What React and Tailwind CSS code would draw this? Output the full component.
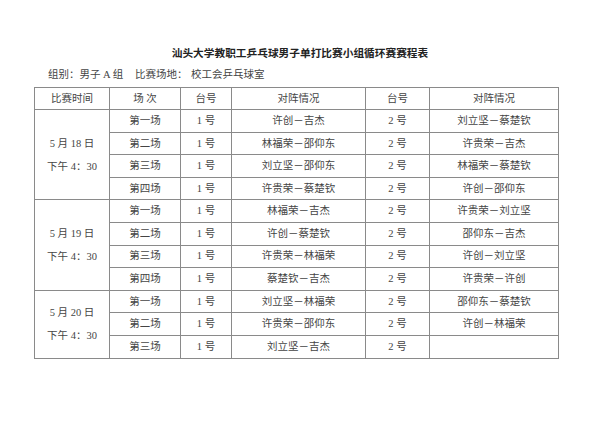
const groups = [
  {
    date: '5 月 18 日',
    time: '下午 4：30',
    rows: [
      ['第一场', '1 号', '许创－吉杰', '2 号', '刘立坚－蔡楚钦'],
      ['第二场', '1 号', '林福荣－邵仰东', '2 号', '许贵荣－吉杰'],
      ['第三场', '1 号', '刘立坚－邵仰东', '2 号', '林福荣－蔡楚钦'],
      ['第四场', '1 号', '许贵荣－蔡楚钦', '2 号', '许创－邵仰东'],
    ],
  },
  {
    date: '5 月 19 日',
    time: '下午 4：30',
    rows: [
      ['第一场', '1 号', '林福荣－吉杰', '2 号', '许贵荣－刘立坚'],
      ['第二场', '1 号', '许创－蔡楚钦', '2 号', '邵仰东－吉杰'],
      ['第三场', '1 号', '许贵荣－林福荣', '2 号', '许创－刘立坚'],
      ['第四场', '1 号', '蔡楚钦－吉杰', '2 号', '许贵荣－许创'],
    ],
  },
  {
    date: '5 月 20 日',
    time: '下午 4：30',
    rows: [
      ['第一场', '1 号', '刘立坚－林福荣', '2 号', '邵仰东－蔡楚钦'],
      ['第二场', '1 号', '许贵荣－邵仰东', '2 号', '许创－林福荣'],
      ['第三场', '1 号', '刘立坚－吉杰', '2 号', ''],
    ],
  },
];

const cell = 'border border-[#8a8a8a] text-center p-0';

export default function App() {
  return (
    <div
      className="w-[600px] h-[424px] bg-white text-[#333] overflow-hidden"
      style={{ fontFamily: '"Liberation Serif", "Noto Sans CJK SC", serif' }}
    >
      <div className="pt-[46px] text-center text-[10.7px] font-bold leading-[14px] text-[#222]">
        汕头大学教职工乒乓球男子单打比赛小组循环赛赛程表
      </div>

      <div className="flex mt-[8px] pl-[48px] text-[10.5px] leading-[14px] text-[#444]">
        <span className="w-[87px]">组别：男子 A 组</span>
        <span className="w-[56px]">比赛场地：</span>
        <span>校工会乒乓球室</span>
      </div>

      <table className="ml-[34px] mt-[5px] w-[524px] table-fixed border-collapse text-[10.5px] text-[#444]">
        <colgroup>
          <col className="w-[75px]" />
          <col className="w-[71px]" />
          <col className="w-[51px]" />
          <col className="w-[134px]" />
          <col className="w-[64px]" />
          <col className="w-[129px]" />
        </colgroup>
        <thead>
          <tr className="h-[22px]">
            <th className={`${cell} font-normal`}>比赛时间</th>
            <th className={`${cell} font-normal`}>场 次</th>
            <th className={`${cell} font-normal`}>台号</th>
            <th className={`${cell} font-normal`}>对阵情况</th>
            <th className={`${cell} font-normal`}>台号</th>
            <th className={`${cell} font-normal`}>对阵情况</th>
          </tr>
        </thead>
        <tbody>
          {groups.map((g) =>
            g.rows.map((r, i) => (
              <tr key={g.date + i} className="h-[22.6px]">
                {i === 0 && (
                  <td className={cell} rowSpan={g.rows.length}>
                    <div className="leading-[23px]">{g.date}</div>
                    <div className="leading-[23px]">{g.time}</div>
                  </td>
                )}
                {r.map((v, j) => (
                  <td key={j} className={cell}>
                    {v}
                  </td>
                ))}
              </tr>
            ))
          )}
        </tbody>
      </table>
    </div>
  );
}
